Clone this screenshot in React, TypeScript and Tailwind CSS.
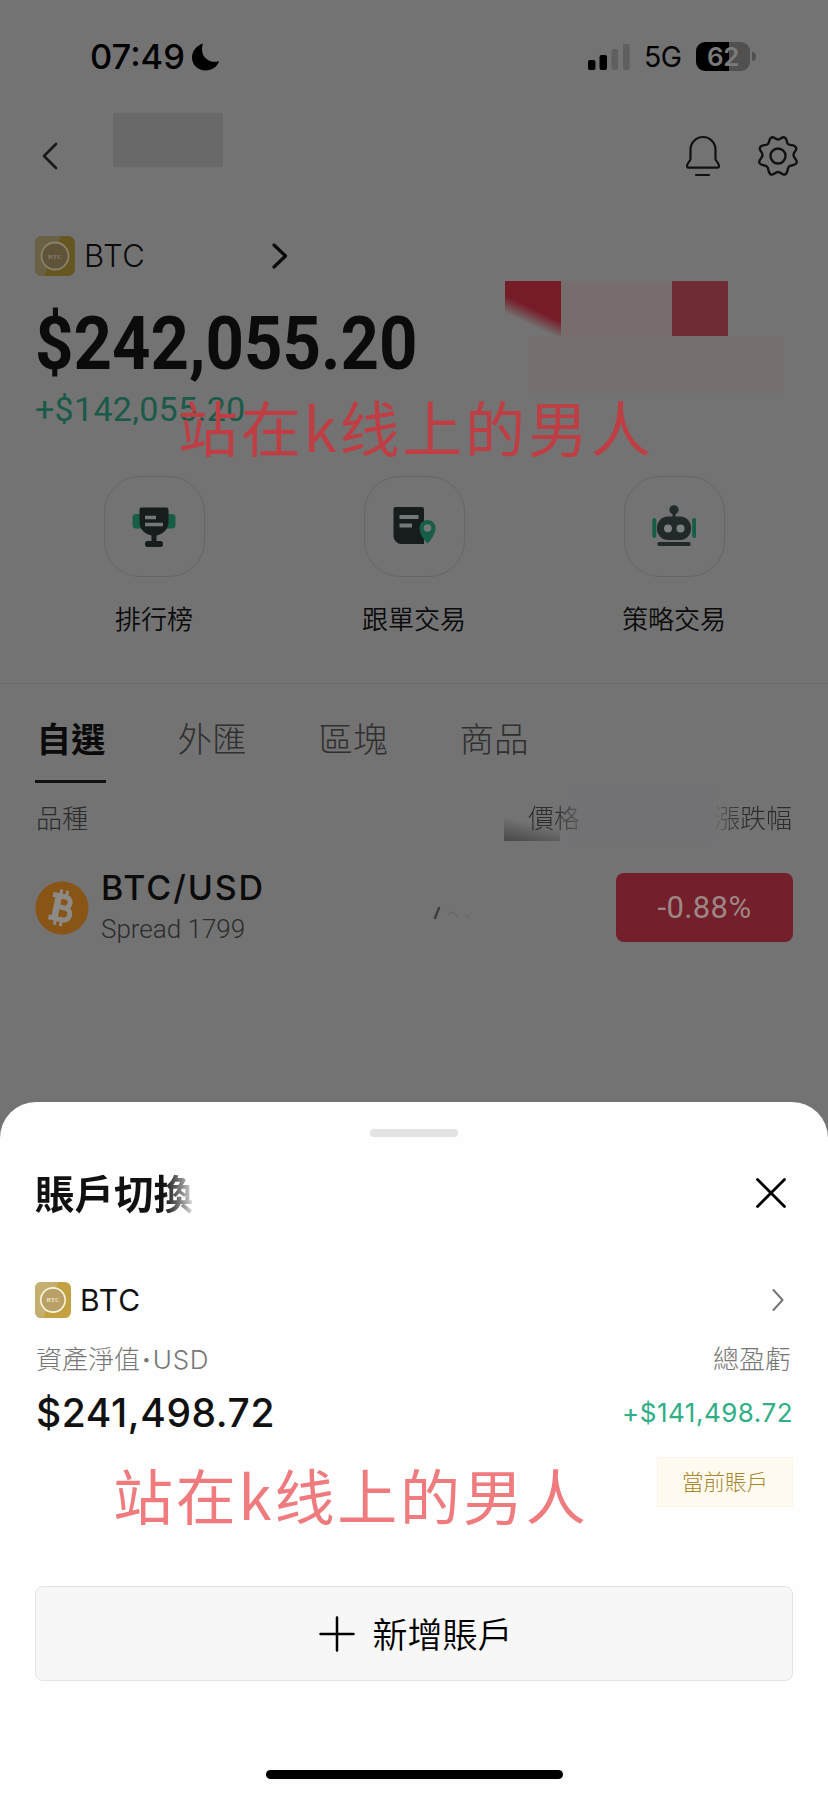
import React from "react";

const actions = [
  { id: "rank", label: "排行榜", icon: <TrophyIcon /> },
  { id: "copy", label: "跟單交易", icon: <CopyTradeIcon /> },
  { id: "strategy", label: "策略交易", icon: <RobotIcon /> },
];

const tabs = ["自選", "外匯", "區塊", "商品"];

function TrophyIcon() {
  return (
    <svg className="w-11 h-11" viewBox="0 0 44 44">
      <rect x="0.500" y="9" width="43" height="14.500" rx="3.500" fill="#175e47" />
      <path
        d="M7.500 4.500a2 2 0 0 1 2-2h25a2 2 0 0 1 2 2V17c0 7-5 12-12 13.500V36h4a2.500 2.500 0 0 1 2.500 2.500v1a2.500 2.500 0 0 1-2.500 2.500h-13a2.500 2.500 0 0 1-2.500-2.500v-1a2.500 2.500 0 0 1 2.500-2.500h4v-5.500C12.500 29 7.500 24 7.500 17z"
        fill="#171c1c"
      />
      <path d="M13 12.500h11M13 19.500h18" stroke="#747878" strokeWidth="3.500" />
    </svg>
  );
}

function CopyTradeIcon() {
  return (
    <svg className="w-11 h-11" viewBox="0 0 44 44">
      <path d="M1.500 4a2 2 0 0 1 2-2H30a2 2 0 0 1 2 2v35H10a8 8 0 0 1-8.500-8z" fill="#171c1c" />
      <path d="M7.500 12h19M7.500 20.500h12.500" stroke="#747878" strokeWidth="4" />
      <path d="M35.500 38.500C31 34 27.500 28 27.500 23a8 8 0 0 1 16 0c0 5-3.500 11-8 15.500z" fill="#175e47" />
      <circle cx="35.500" cy="23" r="3.800" fill="#747878" />
    </svg>
  );
}

function RobotIcon() {
  return (
    <svg className="w-11 h-11" viewBox="0 0 44 44">
      <path d="M2.300 15v16M42.200 15v16" stroke="#175e47" strokeWidth="4" strokeLinecap="round" />
      <circle cx="22" cy="4.800" r="4.600" fill="#22292b" />
      <path d="M22 6v8" stroke="#22292b" strokeWidth="3" />
      <rect x="5" y="11.500" width="34" height="23.500" rx="11" fill="#22292b" />
      <circle cx="16" cy="23.500" r="4" fill="#7c7f80" />
      <circle cx="28.500" cy="23.500" r="4" fill="#7c7f80" />
      <rect x="5.500" y="37" width="33" height="4" rx="1.500" fill="#22292b" />
    </svg>
  );
}

function BellIcon() {
  return (
    <svg className="w-[34px] h-[42px]" viewBox="0 0 34 42" fill="none" stroke="#111" strokeWidth="2.200" strokeLinecap="round">
      <path d="M4.500 14.500a12.500 12.500 0 0 1 25 0V24c0 1.500 3.500 4.500 3.500 7 0 1-.8 1.700-2 1.700H3c-1.200 0-2-.7-2-1.700 0-2.500 3.500-5.500 3.500-7z" />
      <path d="M10 40h13" />
    </svg>
  );
}

function GearIcon() {
  return (
    <svg className="w-10 h-10" viewBox="-20 -20 40 40" fill="none" stroke="#111" strokeWidth="2.400" strokeLinejoin="round">
      <path d="M-6.500-18.500C-4.500-20-3-16.500 0-16.500S4.500-20 6.500-18.500C9.500-17.500 8-14 10-12S16.500-12 18-8.500C19.500-5.500 15.500-4.500 15.500-1S20 3.500 18.500 7C17 10 13 8.500 11 10.500S10 17.500 7 18.500C4.500 19.500 3 16 0 16S-4.500 19.500-7 18.500C-10 17.500-9 12.500-11 10.500S-17 10-18.500 7C-20 3.500-15.500 2.500-15.500-1S-19.500-5.500-18-8.500C-16.500-12-12-10-10-12S-9.500-17.500-6.500-18.500Z" />
      <circle r="7.500" />
    </svg>
  );
}

function CoinBadge({ size, dim }: { size: string; dim?: boolean }) {
  return (
    <svg className={size} viewBox="0 0 40 40">
      <rect width="40" height="40" rx="7" fill={dim ? "#65571f" : "#c3a140"} />
      <path d="M0 7a7 7 0 0 1 7-7h19L9 40H7a7 7 0 0 1-7-7z" fill={dim ? "#6a6046" : "#c4ae70"} />
      <circle cx="20" cy="20" r="13.500" fill={dim ? "#5f533a" : "#b9a066"} stroke={dim ? "#8a8169" : "#fbf3dc"} strokeWidth="1.800" />
      <text x="20" y="22.500" textAnchor="middle" fontSize="7" fontWeight="700" fontFamily="Liberation Serif, serif" fill={dim ? "#857c68" : "#efe3c4"}>
        BTC
      </text>
    </svg>
  );
}

function BitcoinIcon() {
  return (
    <svg className="w-[54px] h-[54px]" viewBox="0 0 54 54">
      <circle cx="27" cy="27" r="26.500" fill="#895516" />
      <g transform="rotate(12 27 27)" fill="none" stroke="#8c8a87" strokeWidth="5">
        <path d="M15.500 15.500h13a5.500 5.500 0 0 1 0 11H21M21 26.500h9a6 6 0 0 1 0 12H15.500" />
        <path d="M21.500 15v24" strokeWidth="6.500" />
        <path d="M23 9v6M29 9v6M23 38v7M29 38v7" strokeWidth="3" />
      </g>
    </svg>
  );
}

function StatusBar() {
  return (
    <div className="h-[113px] flex items-center pl-[90px] pr-[72px] text-black">
      <span className="w-[102px] text-[34.5px] font-medium whitespace-nowrap">07:49</span>
      <svg className="w-7 h-7" viewBox="0 0 28 28">
        <path d="M11 .5C3.500 3 0 9 0 14.500 0 22 6 27.500 13.500 27.500c6.500 0 11.500-3.500 13.700-9.500C18.500 21.500 6.500 14 11 .5z" />
      </svg>
      <div className="ml-auto flex items-center">
        <svg className="w-[42px] h-[26px] mr-[14px]" viewBox="0 0 42 26">
          <rect x="0" y="16" width="7.500" height="10" rx="2" />
          <rect x="11.500" y="11" width="7.500" height="15" rx="2" />
          <rect x="23.500" y="5" width="6.500" height="21" rx="2" fill="#5f5f5f" />
          <rect x="35" y="0" width="6.500" height="26" rx="2" fill="#5f5f5f" />
        </svg>
        <span className="w-[52px] text-[28.5px] tracking-[-0.5px] pt-px">5G</span>
        <div className="w-[54px] h-[29px] rounded-[9px] bg-linear-to-r from-black from-62% to-[#505050] to-62% flex items-center justify-center text-[26px] font-semibold tracking-[-0.5px] text-[#7b7b7b]">
          62
        </div>
        <div className="ml-[2px] w-1 h-[9px] rounded-r-full bg-[#505050]" />
      </div>
    </div>
  );
}

const Watermark = ({ className }: { className: string }) => (
  <div
    className={`absolute text-[60px] leading-[60px] tracking-[2.8px] whitespace-nowrap font-['Noto_Sans_CJK_SC',sans-serif] ${className}`}
  >
    站在k线上的男人
  </div>
);

function AccountSheet() {
  return (
    <div className="absolute inset-x-0 bottom-0 h-[693px] rounded-t-[36px] bg-[#fefefe] px-[35px] text-[#111]">
      <div className="mx-auto mt-[27px] h-2 w-[88px] rounded-full bg-[#e3e3e3]" />
      <div className="mt-[31px] h-[50px] flex items-center justify-between">
        <h2 className="pt-1.5 text-[39.5px] font-bold bg-linear-to-r from-[#111] from-[128px] to-[#fefefe] to-[162px] bg-clip-text text-transparent">
          賬戶切換
        </h2>
        <svg className="w-[30px] h-[30px] mr-[7px]" viewBox="0 0 30 30" stroke="#000" strokeWidth="2.800" strokeLinecap="round">
          <path d="M1.500 1.500l27 27M28.500 1.500l-27 27" />
        </svg>
      </div>
      <div className="mt-16 h-9 flex items-center">
        <CoinBadge size="w-9 h-9" />
        <span className="ml-[9px] text-[30px] tracking-[0.9px]">BTC</span>
        <svg className="ml-auto mr-[9px] w-3 h-[22px]" viewBox="0 0 12 22" fill="none" stroke="#777" strokeWidth="2" strokeLinecap="round" strokeLinejoin="round">
          <path d="M1.500 1l9 10-9 10" />
        </svg>
      </div>
      <div className="mt-[21px] h-10 flex items-center justify-between text-[26px] font-light text-[#777]">
        <span className="pl-px">
          資產淨值<span className="font-bold px-0.5">·</span>
          <span className="tracking-[0.8px]">USD</span>
        </span>
        <span className="pr-0.5">總盈虧</span>
      </div>
      <div className="mt-[13px] h-10 flex items-center justify-between">
        <span className="pl-px pt-0.5 text-[39px] font-[450] tracking-[0.6px]">$241,498.72</span>
        <span className="text-[26px] tracking-[0.5px] text-[#2fae87]">+$141,498.72</span>
      </div>
      <div className="mt-[25px] flex justify-end">
        <span className="w-[136px] h-[50px] flex items-center justify-center border border-[#faf6ea] bg-[#fffbf1] text-[21.500px] font-light text-[#a8862a]">
          當前賬戶
        </span>
      </div>
      <button className="mt-[79px] w-full h-[95px] pl-1 flex items-center justify-center gap-[17px] rounded-lg border border-[#e4e4e4] bg-[#f7f7f7] text-[35px] font-[350] text-black">
        <svg className="w-9 h-9" viewBox="0 0 36 36" stroke="#000" strokeWidth="2.500" strokeLinecap="round">
          <path d="M1.500 18h33M18 1.500v33" />
        </svg>
        <span className="pt-1">新增賬戶</span>
      </button>
      <div className="mx-auto mt-[89px] h-[9px] w-[297px] rounded-full bg-black" />
      <Watermark className="left-[113px] top-[362px] text-[#ef7b7e]" />
    </div>
  );
}

const App = () => {
  return (
    <div className="relative w-[828px] h-[1795px] overflow-hidden bg-[#737373] font-[Inter,'Noto_Sans_CJK_TC',sans-serif] text-[#0b0b0b]">
      <StatusBar />

      <header className="h-[86px] flex items-center pl-[42px] pr-[30px]">
        <svg className="w-4 h-7" viewBox="0 0 16 28" fill="none" stroke="#181818" strokeWidth="2.600" strokeLinecap="round" strokeLinejoin="round">
          <path d="M14 2L2 14l12 12" />
        </svg>
        <div className="ml-[55px] w-[110px] h-[54px] self-start bg-[#696969]" />
        <div className="ml-auto flex items-center gap-[38px]">
          <BellIcon />
          <GearIcon />
        </div>
      </header>

      <section className="px-[35px] pt-[37px] flex">
        <div className="w-[470px]">
          <div className="h-10 flex items-center">
            <CoinBadge size="w-10 h-10" dim />
            <span className="w-[197px] pl-[9px] text-[31px] tracking-[0.5px] font-[350]">BTC</span>
            <svg className="w-4 h-[26px]" viewBox="0 0 16 26" fill="none" stroke="#0b0b0b" strokeWidth="3.200" strokeLinecap="round" strokeLinejoin="round">
              <path d="M2 2l11.500 11L2 24" />
            </svg>
          </div>
          <div className="mt-[28px] h-20 flex items-center origin-left scale-x-[0.913] font-[Roboto,sans-serif] font-bold text-[73.5px]">
            $242,055.20
          </div>
          <div className="mt-[5px] h-10 flex items-center font-[Roboto,sans-serif] text-[34px] tracking-[0.3px] text-[#1a5a48]">
            +$142,055.20
          </div>
        </div>
        <div className="pt-[45px]">
          <div className="h-[55px] flex">
            <div className="w-14 bg-linear-[205deg] from-[#761b28] from-50% to-[#737373] to-72%" />
            <div className="w-[111px] bg-[#766d6c]" />
            <div className="w-14 bg-[#702c35]" />
          </div>
          <div className="ml-6 w-[255px] h-[57px] bg-[#756f70]" />
        </div>
      </section>

      <div className="mt-[47px] px-6 grid grid-cols-3">
        {actions.map((action) => (
          <div key={action.id} className="flex flex-col items-center">
            <div className="w-[101px] h-[101px] rounded-[36px] border border-[#666] flex items-center justify-center">
              {action.icon}
            </div>
            <span className="mt-[23px] h-10 leading-10 text-[26px] font-[350]">{action.label}</span>
          </div>
        ))}
      </div>

      <div className="mt-[43px] border-t border-[#6b6b6b]" />

      <nav className="mt-6 pl-[35px] flex gap-[70.5px]">
        {tabs.map((tab, i) => (
          <span
            key={tab}
            className={`h-[75px] pl-[1.5px] text-[34.5px] leading-[63px] ${
              i === 0 ? "font-bold border-b-3 border-[#111]" : "font-light text-[#303030]"
            }`}
          >
            {tab}
          </span>
        ))}
      </nav>

      <div className="mt-[15px] h-10 px-[35px] flex items-center text-[26px] font-light text-[#2c2c2c]">
        <span className="w-[469px] pl-px">品種</span>
        <div className="w-14 h-[57px] -mt-[11px] shrink-0 bg-linear-[12deg] from-[#484848] to-[#737373] to-35%" />
        <span className="relative -ml-8 bg-linear-to-r from-[#2c2c2c] from-50% to-[#5c5c5c] bg-clip-text text-transparent">
          價格
        </span>
        <div className="-ml-2.5 grow h-[57px] -mt-[11px] bg-[#717274]/60" />
        <span className="pr-px bg-linear-to-r from-[#6b6b6b] to-[#2c2c2c] to-35% bg-clip-text text-transparent">漲跌幅</span>
      </div>

      <div className="mt-[35px] h-[69px] px-[35px] flex items-center">
        <BitcoinIcon />
        <div className="ml-3 w-[320px] -mt-1">
          <div className="h-[42px] leading-[42px] text-[34px] font-[450] tracking-[1.9px] mt-1">BTC/USD</div>
          <div className="h-[40px] leading-[40px] font-[Roboto,sans-serif] text-[26px] font-light text-[#2c2c2c]">
            Spread 1799
          </div>
        </div>
        <svg className="mt-2 ml-3 w-10 h-5" viewBox="0 0 40 20" fill="none" strokeLinecap="round">
          <path d="M2 16L6 6" stroke="#3f3f3f" strokeWidth="2.500" />
          <path d="M16 12l5-2 3 4M36 16l-3-3" stroke="#676767" strokeWidth="1.500" />
        </svg>
        <div className="ml-auto w-[177px] h-[69px] rounded-lg bg-[#731f2c] flex items-center justify-center pt-0.5 font-[Roboto,sans-serif] text-[31px] tracking-[0.4px] text-[#9d8784]">
          -0.88%
        </div>
      </div>

      <Watermark className="left-[178px] top-[396px] text-[#bf3e44]" />
      <AccountSheet />
    </div>
  );
};

export default App;
